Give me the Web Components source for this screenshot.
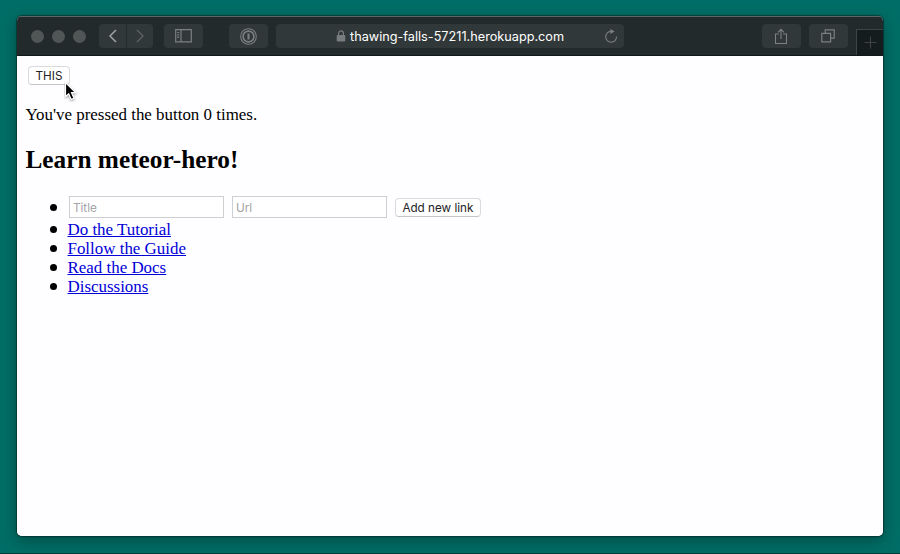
<!DOCTYPE html>
<html lang="en">
<head>
<meta charset="utf-8">
<title>meteor-hero</title>
<style>
html,body{margin:0;height:100%;overflow:hidden}
body{background:#006e66}
</style>
</head>
<body>
<desktop-screen>
  <browser-window address="thawing-falls-57211.herokuapp.com">
    <hero-page></hero-page>
  </browser-window>
</desktop-screen>
<script>
const define = (name, html) => customElements.define(name, class extends HTMLElement {
  constructor() {
    super();
    const t = document.createElement('template');
    t.innerHTML = html;
    this.attachShadow({mode: 'open'}).append(t.content.cloneNode(true));
  }
});

define('desktop-screen', `<style>
:host{display:block;box-sizing:border-box;width:900px;height:554px;padding:16px 17px 17px;background:#006e66;border-bottom:1px solid #003c3a;overflow:hidden}
</style><slot></slot>`);

define('tool-button', `<style>
:host{display:flex;align-items:center;justify-content:center;box-sizing:border-box;width:39px;height:24px;border-radius:4px;background:#313839;color:#7b8080}
::slotted(svg){display:block;fill:none;stroke:currentColor}
</style><slot></slot>`);

define('browser-toolbar', `<style>
:host{display:flex;align-items:flex-start;box-sizing:border-box;height:40px;background:#222a2b;border-top:1px solid #5c6765;border-bottom:1px solid #10181a;padding-top:7px;font-family:Inter,"Liberation Sans",sans-serif}
.lights{display:flex;gap:8px;margin:6px 0 0 13.5px}
.lights i{width:13px;height:13px;border-radius:50%;background:#505656}
.nav{display:flex;gap:1px;margin-left:13.5px}
.nav tool-button{width:27px}
.nav tool-button:first-child{border-radius:4px 0 0 4px;color:#9da2a2}
.nav tool-button:last-child{border-radius:0 4px 4px 0;width:26px;color:#5e6465}
.side{margin-left:11px}.pass{margin-left:26px}
.address{display:flex;align-items:center;box-sizing:border-box;width:348px;height:24px;margin-left:8px;padding:0 6px 0 60px;border-radius:4px;background:#313839;color:#fff;font-size:12.7px}
.address svg{display:block;flex:none}
.address span{width:215px;margin-left:4px;white-space:nowrap;line-height:24px;padding-top:1px}
.reload{margin-left:auto}
.share{margin-left:137.5px}.tabs{margin-left:8px}
.plus{display:flex;align-items:center;justify-content:center;box-sizing:border-box;width:27px;height:26px;margin:5px 0 0 auto;background:#151c1d;border:solid #3d4546;border-width:1px 0 0 1px}
</style>
<div class="lights"><i></i><i></i><i></i></div>
<div class="nav">
<tool-button><svg width="10" height="14" viewBox="0 0 10 14" stroke-width="1.5"><path d="M8 1 2 7l6 6"/></svg></tool-button>
<tool-button><svg width="10" height="14" viewBox="0 0 10 14" stroke-width="1.3"><path d="m2 1 6 6-6 6"/></svg></tool-button>
</div>
<tool-button class="side"><svg width="17" height="14" viewBox="0 0 17 14"><path d="M.7.7h15.6v12.1H.7zM6 .7v12.1M2.2 3.5h2M2.2 5.8h2M2.2 8.1h2" stroke-width="1.2"/></svg></tool-button>
<tool-button class="pass"><svg width="17" height="17" viewBox="0 0 17 17"><circle cx="8.5" cy="8.5" r="7.8" stroke-width="1.1"/><circle cx="8.5" cy="8.5" r="5.4" stroke-width="1.6"/><path d="M8.5 5.4v6.2" stroke-width="2.1"/></svg></tool-button>
<div class="address">
<svg width="10" height="12" viewBox="0 0 10 12"><rect x=".7" y="5" width="8.6" height="6.5" rx="1" fill="#777c7d"/><path d="M2.6 5.5V3.3a2.4 2.4 0 0 1 4.8 0v2.2" fill="none" stroke="#777c7d" stroke-width="1.2"/></svg>
<span data-address></span>
<svg class="reload" width="14" height="15" viewBox="0 0 14 15"><path d="M7.2 2.4a5.4 5.4 0 1 0 5.3 5.2" fill="none" stroke="#7b8080" stroke-width="1.1"/><path d="m6.4 0 4.2 2.5-4.2 2.4z" fill="#7b8080"/></svg>
</div>
<tool-button class="share"><svg width="14" height="17" viewBox="0 0 14 17" stroke-width="1.1"><path d="M4.8 6H1.5v9.5h11V6H9.2M7 11V1.5M4 4.3l3-3 3 3"/></svg></tool-button>
<tool-button class="tabs"><svg width="14" height="14" viewBox="0 0 14 14" stroke-width="1.2"><path d="M.8 4.4h8.8v8.4H.8zM4.2 4V.8h9v8.4H10"/></svg></tool-button>
<div class="plus"><svg width="13" height="13" viewBox="0 0 13 13"><path d="M6.5.5v12M.5 6.5h12" stroke="#3d4445" stroke-width="1.1"/></svg></div>`);

customElements.define('browser-window', class extends HTMLElement {
  constructor() {
    super();
    const root = this.attachShadow({mode: 'open'});
    root.innerHTML = `<style>
:host{display:flex;flex-direction:column;width:866px;height:520px;border-radius:5px;overflow:hidden;background:#fefdff;box-shadow:0 0 1px 1px rgba(0,30,28,.55),0 5px 15px rgba(0,20,18,.36)}
::slotted(*){flex:1}
</style><browser-toolbar></browser-toolbar><slot></slot>`;
    root.querySelector('browser-toolbar').shadowRoot.querySelector('[data-address]').textContent = this.getAttribute('address');
  }
});

define('push-button', `<style>
:host{display:block;box-sizing:border-box;height:19px;border:1px solid #dad9dc;border-bottom-color:#c6c5c8;border-radius:4px;background:#fff;color:#222;font:11.7px/19px Inter,"Liberation Sans",sans-serif;text-align:center;white-space:nowrap}
</style><slot></slot>`);

define('text-field', `<style>
:host{display:block;box-sizing:border-box;width:155px;height:22px;border:1px solid #cfcfd1;background:#fff;padding-left:3px;color:#a4a4a6;font:11.8px/23px Inter,"Liberation Sans",sans-serif}
</style><slot></slot>`);

define('link-item', `<style>
:host{display:flex;align-items:center;height:19px;color:#0000d8}
:host::before{content:"";flex:none;width:7px;height:7px;border-radius:50%;background:#000;margin:0 11px 0 24px}
span{text-decoration:underline;line-height:19px;white-space:nowrap}
</style><span><slot></slot></span>`);

define('mouse-pointer', `<style>
:host{position:absolute;left:64px;top:81px;width:15px;height:21px}svg{display:block}
</style><svg width="15" height="21" viewBox="0 0 15 21"><path d="M1.5 1.5v14.2l3.2-3 2.5 5.7 2.8-1.2-2.5-5.5h4.3z" fill="#000" stroke="#fff" stroke-width="1.2" style="filter:drop-shadow(0 1px 1px #0006)"/></svg>`);

define('hero-page', `<style>
:host{display:block;box-sizing:border-box;padding:10px 8.5px 0;background:#fefdff;color:#000;font:16.93px/19px "Liberation Serif",serif}
.this{width:42px;margin-left:2.5px}
p{margin:20px 0 0;white-space:nowrap}
h2{margin:21px 0 0;font-size:25.3px;line-height:29px;white-space:nowrap}
.list{margin-top:22px}
.form{display:flex;align-items:center;height:22px;margin-bottom:2px}
.form::before{content:"";flex:none;width:7px;height:7px;border-radius:50%;background:#000;margin:0 12.4px 0 24px}
.form text-field+text-field{margin-left:8px}
.form push-button{width:86px;margin:1px 0 0 8px}
</style>
<push-button class="this">THIS</push-button>
<p>You've pressed the button 0 times.</p>
<h2>Learn meteor-hero!</h2>
<div class="list">
<div class="form"><text-field>Title</text-field><text-field>Url</text-field><push-button>Add new link</push-button></div>
<link-item>Do the Tutorial</link-item>
<link-item>Follow the Guide</link-item>
<link-item>Read the Docs</link-item>
<link-item>Discussions</link-item>
</div>
<mouse-pointer></mouse-pointer>`);
</script>
</body>
</html>
